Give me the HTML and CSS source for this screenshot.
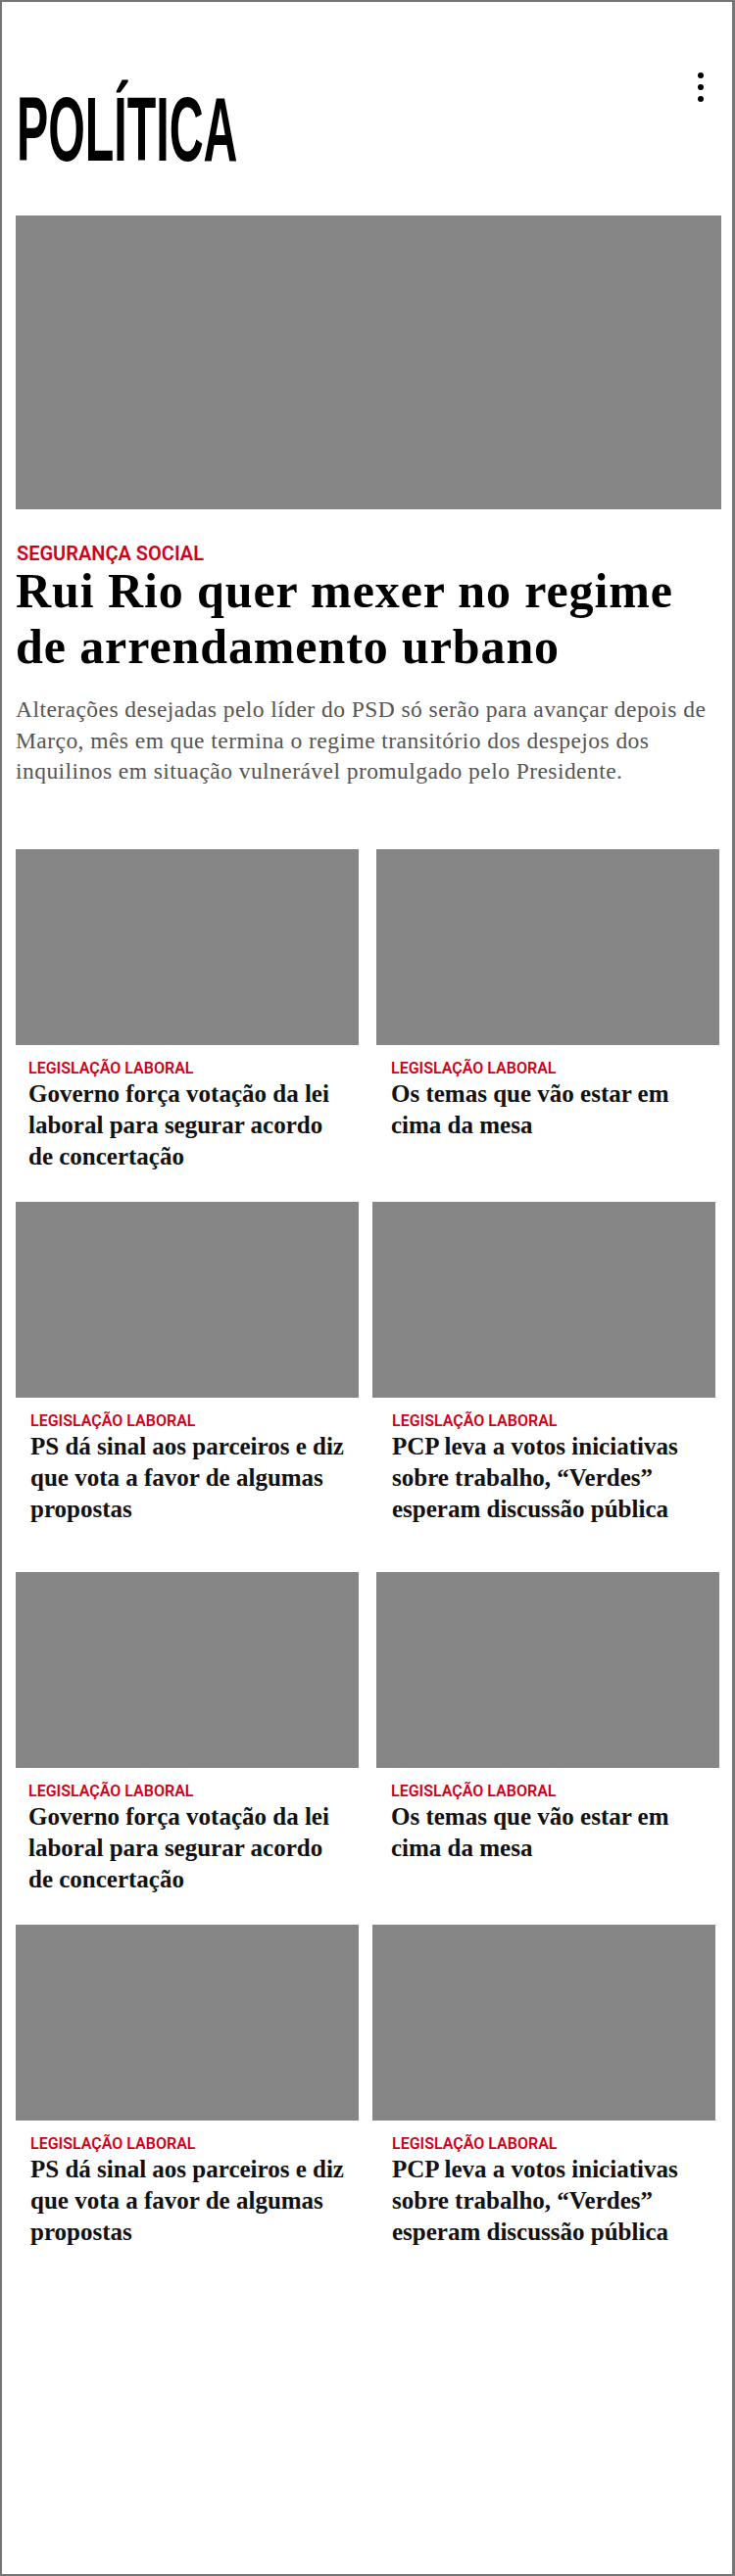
FILE: index.html
```html
<!DOCTYPE html>
<html lang="pt">
<head>
<meta charset="utf-8">
<title>Política</title>
<link rel="stylesheet" href="styles.css">
</head>
<body>
<div class="page">
  <header class="header">
    <h1 class="section-title"><span class="section-title-text">POLÍTICA</span></h1>
    <div class="menu" aria-label="Mais opções">
      <span class="dot"></span><span class="dot"></span><span class="dot"></span>
    </div>
  </header>

  <article class="hero">
    <div class="hero-img"></div>
    <div class="hero-kicker">SEGURANÇA SOCIAL</div>
    <h2 class="hero-title">Rui Rio quer mexer no regime de arrendamento urbano</h2>
    <p class="hero-summary">Alterações desejadas pelo líder do PSD só serão para avançar depois de Março, mês em que termina o regime transitório dos despejos dos inquilinos em situação vulnerável promulgado pelo Presidente.</p>
  </article>

  <section class="block">
    <div class="row row-a">
      <article class="card">
        <div class="card-img"></div>
        <div class="card-body">
          <div class="kicker">LEGISLAÇÃO LABORAL</div>
          <h3 class="card-title">Governo força votação da lei laboral para segurar acordo de concertação</h3>
        </div>
      </article>
      <article class="card">
        <div class="card-img"></div>
        <div class="card-body">
          <div class="kicker">LEGISLAÇÃO LABORAL</div>
          <h3 class="card-title">Os temas que vão estar em cima da mesa</h3>
        </div>
      </article>
    </div>
    <div class="row row-b">
      <article class="card">
        <div class="card-img"></div>
        <div class="card-body">
          <div class="kicker">LEGISLAÇÃO LABORAL</div>
          <h3 class="card-title">PS dá sinal aos parceiros e diz que vota a favor de algumas propostas</h3>
        </div>
      </article>
      <article class="card">
        <div class="card-img"></div>
        <div class="card-body">
          <div class="kicker">LEGISLAÇÃO LABORAL</div>
          <h3 class="card-title">PCP leva a votos iniciativas sobre trabalho, “Verdes” esperam discussão pública</h3>
        </div>
      </article>
    </div>
  </section>

  <section class="block">
    <div class="row row-a">
      <article class="card">
        <div class="card-img"></div>
        <div class="card-body">
          <div class="kicker">LEGISLAÇÃO LABORAL</div>
          <h3 class="card-title">Governo força votação da lei laboral para segurar acordo de concertação</h3>
        </div>
      </article>
      <article class="card">
        <div class="card-img"></div>
        <div class="card-body">
          <div class="kicker">LEGISLAÇÃO LABORAL</div>
          <h3 class="card-title">Os temas que vão estar em cima da mesa</h3>
        </div>
      </article>
    </div>
    <div class="row row-b">
      <article class="card">
        <div class="card-img"></div>
        <div class="card-body">
          <div class="kicker">LEGISLAÇÃO LABORAL</div>
          <h3 class="card-title">PS dá sinal aos parceiros e diz que vota a favor de algumas propostas</h3>
        </div>
      </article>
      <article class="card">
        <div class="card-img"></div>
        <div class="card-body">
          <div class="kicker">LEGISLAÇÃO LABORAL</div>
          <h3 class="card-title">PCP leva a votos iniciativas sobre trabalho, “Verdes” esperam discussão pública</h3>
        </div>
      </article>
    </div>
  </section>
</div>
</body>
</html>
```

FILE: styles.css
```css
* { box-sizing: border-box; }

html, body {
  margin: 0;
  padding: 0;
  background: #ffffff;
}

.page {
  width: 750px;
  height: 2630px;
  border: 2px solid #767676;
  border-right-width: 3px;
  padding-left: 14px;
  overflow: hidden;
  background: #ffffff;
}

.header {
  display: flex;
  justify-content: space-between;
  align-items: flex-start;
  height: 218px;
}

.section-title {
  margin: 84px 0 0 1px;
  font-family: "Liberation Sans Narrow", "Liberation Sans", Arial, sans-serif;
  font-weight: 700;
  font-size: 92px;
  line-height: 92px;
  color: #000;
  white-space: nowrap;
}

.section-title-text {
  display: inline-block;
  transform: scaleX(0.525);
  transform-origin: left center;
  letter-spacing: 0;
}

.menu {
  margin: 72px 29px 0 0;
  display: flex;
  flex-direction: column;
  gap: 6px;
}

.dot {
  display: block;
  width: 6px;
  height: 6px;
  border-radius: 50%;
  background: #000;
}

.hero-img {
  width: 720px;
  height: 300px;
  background: #868686;
}

.hero-kicker {
  margin-top: 35px;
  font-family: Roboto, "Liberation Sans", sans-serif;
  font-weight: 600;
  font-size: 20px;
  line-height: 20px;
  color: #d0021b;
  padding-left: 1px;
}

.hero-title {
  margin: 0;
  width: 722px;
  font-family: "Liberation Serif", "DejaVu Serif", serif;
  font-weight: 700;
  font-size: 50px;
  line-height: 57px;
  color: #000;
  letter-spacing: 0.9px;
}

.hero-summary {
  margin: 20px 0 0 0;
  width: 722px;
  font-family: "Liberation Serif", "DejaVu Serif", serif;
  font-weight: 400;
  font-size: 23.5px;
  line-height: 31.5px;
  letter-spacing: 0.45px;
  color: #555555;
}

.block {
  display: flex;
  flex-direction: column;
  gap: 30px;
}

.block:first-of-type {
  margin-top: 63px;
}

.block + .block {
  margin-top: 48px;
}

.row {
  display: grid;
  grid-template-columns: 350px 350px;
}

.row-a { column-gap: 18px; }
.row-b { column-gap: 14px; }

.card-img {
  width: 350px;
  height: 200px;
  background: #868686;
}

.card-body {
  padding-top: 14px;
  min-height: 130px;
}

.row-a .card:first-child .card-body { padding-left: 13px; }
.row-a .card:last-child .card-body { padding-left: 15px; }
.row-b .card:first-child .card-body { padding-left: 15px; }
.row-b .card:last-child .card-body { padding-left: 20px; }

.kicker {
  font-family: Roboto, "Liberation Sans", sans-serif;
  font-weight: 600;
  font-size: 16px;
  line-height: 20px;
  color: #d0021b;
}

.card-title {
  margin: 0;
  width: 323px;
  font-family: "Liberation Serif", "DejaVu Serif", serif;
  font-weight: 700;
  font-size: 25px;
  line-height: 32px;
  color: #111111;
}
```
